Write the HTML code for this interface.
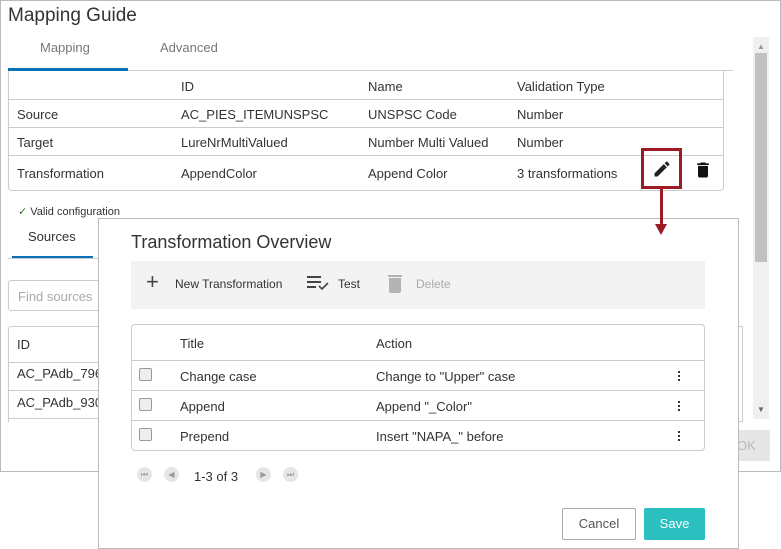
<!DOCTYPE html>
<html><head><meta charset="utf-8"><style>
*{box-sizing:border-box;margin:0;padding:0}
body{width:781px;height:548px;background:#fff;font-family:"Liberation Sans",sans-serif;position:relative;overflow:hidden;color:#333;font-size:13px}
.a{position:absolute;white-space:nowrap}
.outer{position:absolute;left:0;top:0;width:781px;height:472px;border:1px solid #bbb;background:#fff}
.hl{position:absolute;height:1px;background:#ccc}
.inner{position:absolute;left:98px;top:218px;width:641px;height:331px;border:1px solid #bbb;background:#fff}
.dots{position:absolute;width:3px}
.dots i{display:block;width:2px;height:2px;background:#333;margin-bottom:2px}
</style></head><body>
<div class="outer"></div>
<div class="a" style="left:8px;top:5px;font-size:19px;color:#333">Mapping Guide</div>
<div class="a" style="left:40px;top:40px;color:#777">Mapping</div>
<div class="a" style="left:160px;top:40px;color:#777">Advanced</div>
<div class="a" style="left:8px;top:68px;width:120px;height:3px;background:#0a70b8"></div>
<div class="hl" style="left:128px;top:70px;width:605px"></div>
<div class="a" style="left:8px;top:71px;width:716px;height:120px;border:1px solid #ccc;border-top:none;border-radius:0 0 4px 4px"></div>
<div class="hl" style="left:9px;top:99px;width:714px"></div>
<div class="hl" style="left:9px;top:127px;width:714px"></div>
<div class="hl" style="left:9px;top:155px;width:714px"></div>
<div class="a" style="left:181px;top:79px">ID</div><div class="a" style="left:368px;top:79px">Name</div><div class="a" style="left:517px;top:79px">Validation Type</div>
<div class="a" style="left:17px;top:107px">Source</div><div class="a" style="left:181px;top:107px">AC_PIES_ITEMUNSPSC</div><div class="a" style="left:368px;top:107px">UNSPSC Code</div><div class="a" style="left:517px;top:107px">Number</div>
<div class="a" style="left:17px;top:135px">Target</div><div class="a" style="left:181px;top:135px">LureNrMultiValued</div><div class="a" style="left:368px;top:135px">Number Multi Valued</div><div class="a" style="left:517px;top:135px">Number</div>
<div class="a" style="left:17px;top:166px">Transformation</div><div class="a" style="left:181px;top:166px">AppendColor</div><div class="a" style="left:368px;top:166px">Append Color</div><div class="a" style="left:517px;top:166px">3 transformations</div>
<div class="a" style="left:641px;top:148px;width:41px;height:41px;border:3px solid #9b1c22"></div>
<svg class="a" style="left:652px;top:159px" width="20" height="20" viewBox="0 0 24 24"><path d="M3 17.25V21h3.75L17.81 9.94l-3.75-3.75L3 17.25zM20.71 7.04a1 1 0 000-1.41l-2.34-2.34a1 1 0 00-1.41 0l-1.83 1.83 3.75 3.75 1.83-1.83z" fill="#222"/></svg>
<svg class="a" style="left:693px;top:160px" width="20" height="20" viewBox="0 0 24 24"><path d="M6 19c0 1.1.9 2 2 2h8c1.1 0 2-.9 2-2V7H6v12zM19 4h-3.5l-1-1h-5l-1 1H5v2h14V4z" fill="#111"/></svg>
<div class="a" style="left:753px;top:37px;width:16px;height:382px;background:#f0f0f0"></div>
<div class="a" style="left:755px;top:53px;width:12px;height:209px;background:#c1c1c1"></div>
<div class="a" style="left:757px;top:42px;font-size:8px;color:#999">▲</div>
<div class="a" style="left:757px;top:405px;font-size:8px;color:#666">▼</div>
<div class="a" style="left:737px;top:430px;width:33px;height:31px;background:#e6e6e6;color:#bbb;padding:8px 0 0 0px">OK</div>
<div class="a" style="left:18px;top:205px;font-size:11px;color:#2b7a2b">✓ <span style="color:#333">Valid configuration</span></div>
<div class="a" style="left:28px;top:229px">Sources</div>
<div class="a" style="left:12px;top:256px;width:81px;height:3px;background:#0a70b8"></div>
<div class="hl" style="left:8px;top:258px;width:90px"></div>
<div class="a" style="left:8px;top:280px;width:100px;height:31px;border:1px solid #ccc;border-radius:3px;color:#aaa;padding:8px 0 0 9px">Find sources</div>
<div class="a" style="left:8px;top:326px;width:100px;height:96px;border:1px solid #ccc;border-bottom:none;border-radius:3px 3px 0 0"></div>
<div class="hl" style="left:9px;top:362px;width:90px"></div><div class="hl" style="left:9px;top:390px;width:90px"></div><div class="hl" style="left:9px;top:418px;width:90px"></div>
<div class="a" style="left:17px;top:337px">ID</div><div class="a" style="left:17px;top:366px">AC_PAdb_796</div><div class="a" style="left:17px;top:395px">AC_PAdb_930</div>
<div class="a" style="left:738px;top:326px;width:5px;height:96px;border:1px solid #ccc;border-left:none"></div>
<div class="inner"></div>
<div class="a" style="left:660px;top:188px;width:3px;height:38px;background:#9b1c22"></div>
<div class="a" style="left:655px;top:224px;width:0;height:0;border-left:6px solid transparent;border-right:6px solid transparent;border-top:11px solid #9b1c22"></div>
<div class="a" style="left:131px;top:232px;font-size:18px;color:#333">Transformation Overview</div>
<div class="a" style="left:131px;top:261px;width:574px;height:48px;background:#f3f3f3"></div>
<div class="a" style="left:146px;top:271px;font-size:22px;line-height:22px;color:#444">+</div>
<div class="a" style="left:175px;top:277px;font-size:12px;color:#333">New Transformation</div>
<svg class="a" style="left:306px;top:275px" width="24" height="16" viewBox="0 0 24 16"><path d="M1 2h14M1 7h14M1 12h9" stroke="#444" stroke-width="2"/><path d="M13 11l3 3 6-6" stroke="#444" stroke-width="1.6" fill="none"/></svg>
<div class="a" style="left:338px;top:277px;font-size:12px">Test</div>
<svg class="a" style="left:386px;top:273px" width="18" height="20" viewBox="0 0 18 20"><path d="M3 5h12v13c0 1-1 2-2 2H5c-1 0-2-1-2-2zM2 2h14v2H2z" fill="#b3b3b3"/></svg>
<div class="a" style="left:416px;top:277px;font-size:12px;color:#aaa">Delete</div>
<div class="a" style="left:131px;top:324px;width:574px;height:127px;border:1px solid #ccc;border-radius:4px"></div>
<div class="hl" style="left:132px;top:360px;width:572px"></div><div class="hl" style="left:132px;top:390px;width:572px"></div><div class="hl" style="left:132px;top:420px;width:572px"></div>
<div class="a" style="left:180px;top:336px">Title</div><div class="a" style="left:376px;top:336px">Action</div>
<div class="a" style="left:139px;top:368px;width:13px;height:13px;border:1px solid #999;border-radius:2px;background:#eee"></div>
<div class="a" style="left:139px;top:398px;width:13px;height:13px;border:1px solid #999;border-radius:2px;background:#eee"></div>
<div class="a" style="left:139px;top:428px;width:13px;height:13px;border:1px solid #999;border-radius:2px;background:#eee"></div>
<div class="a" style="left:180px;top:369px">Change case</div><div class="a" style="left:376px;top:369px">Change to "Upper" case</div>
<div class="a" style="left:180px;top:399px">Append</div><div class="a" style="left:376px;top:399px">Append "_Color"</div>
<div class="a" style="left:180px;top:429px">Prepend</div><div class="a" style="left:376px;top:429px">Insert "NAPA_" before</div>
<div class="dots" style="left:678px;top:371px"><i></i><i></i><i></i></div>
<div class="dots" style="left:678px;top:401px"><i></i><i></i><i></i></div>
<div class="dots" style="left:678px;top:431px"><i></i><i></i><i></i></div>
<div class="a" style="left:137px;top:467px;width:15px;height:15px;border-radius:50%;background:#e6e6e6;color:#999;font-size:8px;text-align:center;line-height:15px">⏮</div>
<div class="a" style="left:164px;top:467px;width:15px;height:15px;border-radius:50%;background:#e6e6e6;color:#999;font-size:8px;text-align:center;line-height:15px">◀</div>
<div class="a" style="left:194px;top:469px">1-3 of 3</div>
<div class="a" style="left:256px;top:467px;width:15px;height:15px;border-radius:50%;background:#e6e6e6;color:#999;font-size:8px;text-align:center;line-height:15px">▶</div>
<div class="a" style="left:283px;top:467px;width:15px;height:15px;border-radius:50%;background:#e6e6e6;color:#999;font-size:8px;text-align:center;line-height:15px">⏭</div>
<div class="a" style="left:562px;top:508px;width:74px;height:32px;border:1px solid #aaa;border-radius:2px;text-align:center;line-height:30px;color:#555">Cancel</div>
<div class="a" style="left:644px;top:508px;width:61px;height:32px;background:#2bbfbf;border-radius:2px;text-align:center;line-height:32px;color:#fff">Save</div>
</body></html>
